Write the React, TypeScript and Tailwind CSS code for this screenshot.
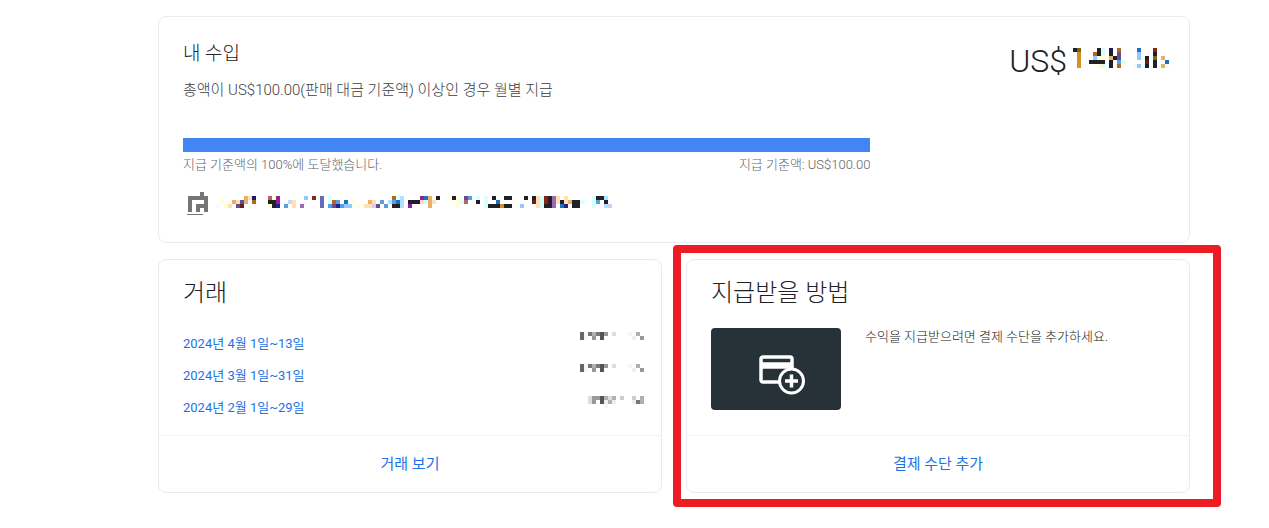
import React from 'react';

type MosaicProps = { rows: string[]; className?: string };

const palette: Record<string, string> = {
  k: '#202124',
  n: '#1a1a6a',
  N: '#1f1f90',
  b: '#1f70c0',
  B: '#5a9fdc',
  s: '#90c8ff',
  S: '#b0e0ff',
  c: '#d8ffff',
  C: '#effffd',
  y: '#ffffd0',
  Y: '#fffff0',
  o: '#eab068',
  O: '#ffe2b0',
  g: '#cf9422',
  w: '#b06a20',
  W: '#7c6320',
  r: '#902020',
  R: '#602020',
  p: '#b06868',
  m: '#8f1f9a',
  v: '#6a4a90',
  V: '#6a6ab4',
  l: '#9a6ab8',
  L: '#dccce8',
  '1': '#555555',
  '2': '#666666',
  '3': '#777777',
  '4': '#999999',
  '5': '#b0b0b0',
  '6': '#cccccc',
  '7': '#dedede',
  '8': '#eeeeee',
  '9': '#f6f6f6',
};

// Each character is one 4px block, a dot leaves the block empty
const Mosaic = ({ rows, className }: MosaicProps) => {
  const width = Math.max(...rows.map((row) => row.length)) * 4;
  const height = rows.length * 4;
  return (
    <svg
      width={width}
      height={height}
      viewBox={`0 0 ${width} ${height}`}
      shapeRendering="crispEdges"
      className={className}
      aria-hidden="true"
    >
      {rows.map((row, y) =>
        row.split('').map((key, x) =>
          key === '.' ? null : (
            <rect key={`${x}-${y}`} x={x * 4} y={y * 4} width={4} height={4} fill={palette[key]} />
          )
        )
      )}
    </svg>
  );
};

const amountRows = [
  '.kW....kc.n.w....b...r',
  '..g...wkc.k.v....s...k',
  '..g...syy.okv....sCk.W.o',
  '..g..kkkk.k.Bc.....R.k..b',
  '..g....yc.k.w.Y.CsCk.k.oC',
];

const accountRows = [
  '.......oOn...pym......s.rCV.c...............wc' + 'S....mbo.k..Yky.vB.c.c.k..kk...k.kOcrklO.O......ckkS',
  '.y..oOvo.w...kkm..SO......V.cwB.b.y...oO.B.SBb' + 'S.kkkOcoO...Y.ycp..k.c..b........ROcrklOkOokkcC.cB.k',
  'C.yO.vR......ykN.B.O.l....V.BvNBss.y.OOLv.B.kk' + 'S.m....o......y......ckkkgkk.Ys...Ockkl.bN.kk...c..SL',
];

const earningRows = ['2935314.7...9.5.', '29.4.1.......8.4'];

const transactions = [
  { period: '2024년 4월 1일~13일', rows: earningRows },
  { period: '2024년 3월 1일~31일', rows: earningRows },
  { period: '2024년 2월 1일~29일', rows: ['..7441575.6..6.5', '..74.1858....835', '......9.........'] },
];

const BankIcon = () => (
  <svg width="25" height="24" viewBox="0 0 25 24" fill="#757575" shapeRendering="crispEdges" aria-hidden="true">
    <path d="M17 1h4v4h-4zM5 5h20v4H5zM5 9h4v12H5zM21 9h4v12h-4zM13 13h8v4h-8zM13 17h4v4h-4z" />
    <path d="M4 23h16v1H4z" />
  </svg>
);

const AddCardIcon = () => (
  <svg width="48" height="40" viewBox="0 0 48 40" fill="none" stroke="#fff" aria-hidden="true">
    <rect x="2" y="2" width="31" height="25" rx="2" strokeWidth="3.5" />
    <path d="M2 10.5h31" strokeWidth="6.5" />
    <circle cx="32.5" cy="26" r="12" fill="#263238" strokeWidth="3" />
    <path d="M32.5 19.5v13M26 26h13" strokeWidth="3.5" />
  </svg>
);

const App = () => {
  return (
    <main className="bg-white pl-[158px] pr-[79px] pt-4 pb-5 font-['Roboto','Noto_Sans_CJK_KR',sans-serif] text-[#202124]">
      <section className="rounded-lg border border-[#e8eaed] pl-6 pr-5 pt-5 pb-[27px]">
        <div className="flex items-start justify-between">
          <div>
            <h2 className="text-[19px] leading-[34px] font-light">내 수입</h2>
            <p className="mt-[6px] text-[15px] leading-[26px] font-light text-[#3c4043]">
              총액이 US$100.00(판매 대금 기준액) 이상인 경우 월별 지급
            </p>
          </div>
          <div className="flex items-start gap-[2px] pt-1">
            <span className="text-[32px] leading-10 font-light">US$</span>
            <Mosaic rows={amountRows} className="mt-[7px]" />
          </div>
        </div>

        <div className="mt-[35px] mr-1">
          <div className="w-[70%]">
            <div
              role="progressbar"
              aria-label="지급 기준액"
              aria-valuenow={100}
              className="h-[14px] bg-[#4285f4]"
            ></div>
            <div className="flex justify-between text-[13px] leading-[26px] font-light text-[#5f6368]">
              <span>지급 기준액의 100%에 도달했습니다.</span>
              <span>지급 기준액: US$100.00</span>
            </div>
          </div>
        </div>

        <div className="mt-[13px] flex items-start gap-2">
          <BankIcon />
          <Mosaic rows={accountRows} className="mt-[5px]" />
        </div>
      </section>

      <div className="mt-4 grid grid-cols-2 gap-6">
        <section className="flex flex-col rounded-lg border border-[#e8eaed]">
          <div className="flex-1 pt-4 pl-6 pr-[17px]">
            <h2 className="text-2xl leading-[34px] font-light">거래</h2>
            <ul className="mt-[18px]">
              {transactions.map((item) => (
                <li key={item.period} className="flex h-8 items-start justify-between">
                  <a href="#" className="pt-1 text-[13px] leading-6 text-[#1a73e8]">{item.period}</a>
                  <Mosaic rows={item.rows} className="mt-1" />
                </li>
              ))}
            </ul>
          </div>
          <div className="border-t border-[#f1f3f4] py-4 text-center leading-6">
            <a href="#" className="text-[15px] text-[#1a73e8]">거래 보기</a>
          </div>
        </section>

        <div className="relative">
          <section className="flex h-full flex-col rounded-lg border border-[#e8eaed]">
            <div className="flex-1 px-6 pt-4 pb-[25px]">
              <h2 className="text-2xl leading-[34px] font-light">지급받을 방법</h2>
              <div className="mt-[18px] flex gap-6">
                <div className="flex h-[82px] w-[130px] items-center justify-center rounded bg-[#263238] pl-[14px] pt-3">
                  <AddCardIcon />
                </div>
                <p className="text-[13px] leading-[18px] font-light">수익을 지급받으려면 결제 수단을 추가하세요.</p>
              </div>
            </div>
            <div className="border-t border-[#f1f3f4] py-4 text-center leading-6">
              <a href="#" className="text-[15px] text-[#1a73e8]">결제 수단 추가</a>
            </div>
          </section>
          {/* Highlight frame */}
          <div className="pointer-events-none absolute -top-[14px] -right-[31px] -bottom-[14px] -left-[13px] rounded border-8 border-[#ed1c24]"></div>
        </div>
      </div>
    </main>
  );
};

export default App;
